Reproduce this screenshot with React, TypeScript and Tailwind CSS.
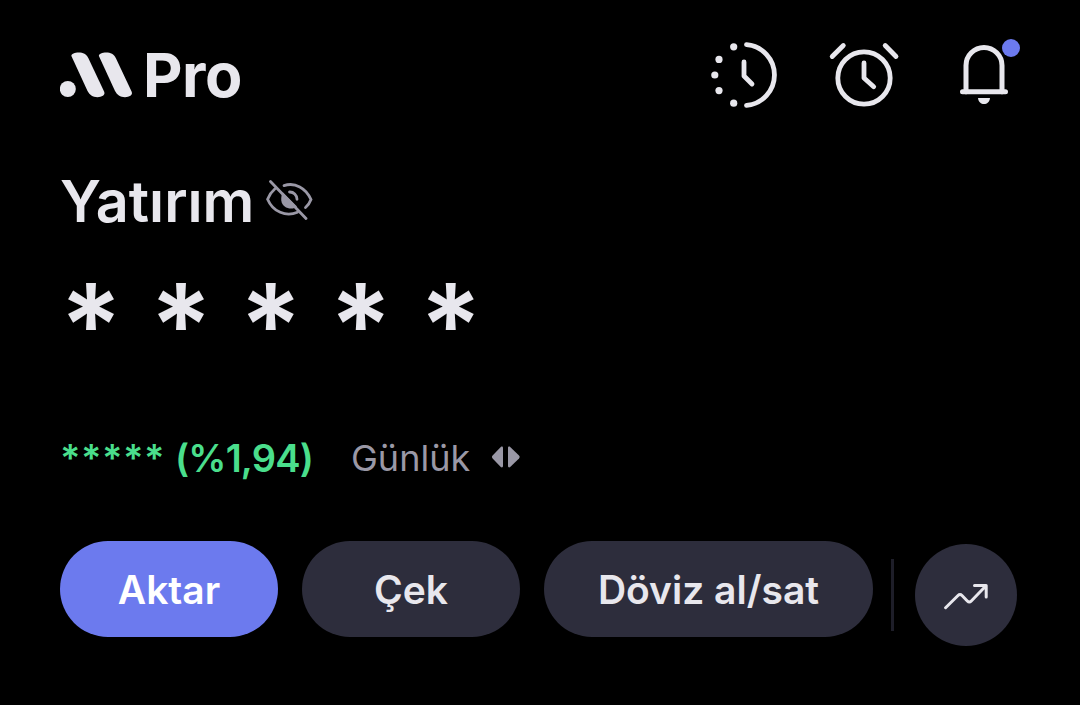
import type { ReactNode } from 'react';

const actions = [
  { label: 'Aktar', className: 'w-[218px] bg-[#6c7aee] text-white' },
  { label: 'Çek', className: 'w-[218px] bg-[#2d2d3c] text-[#e8e7ed]' },
  { label: 'Döviz al/sat', className: 'w-[329px] bg-[#2d2d3c] text-[#e8e7ed]' },
];

export default function App() {
  return (
    <main className="h-[705px] w-[1080px] overflow-hidden bg-black px-[60px] pt-[35px] font-['Inter',sans-serif] text-[#e8e7ed]">
      <Header />

      <section className="mt-[48px]">
        <div className="flex h-[76px] items-center">
          <h1 className="w-[206px] text-[57.5px] leading-[76px] font-semibold whitespace-nowrap">
            Yatırım
          </h1>
          <HiddenIcon />
        </div>
        <p className="mt-[35px] h-[103px] text-[115px] leading-[104px] font-semibold tracking-[-0.55px] whitespace-nowrap">
          * * * * *
        </p>
        <div className="mt-[51px] flex h-[60px] items-center">
          <p className="flex w-[291px] text-[38px] font-semibold whitespace-nowrap text-[#4ade8c]">
            <span className="w-[115px] tracking-[0.5px]">*****</span>
            <span className="tracking-[-0.85px]">(%1,94)</span>
          </p>
          <button className="flex items-center text-[#9a98a6]">
            <span className="w-[140px] text-left text-[36px] whitespace-nowrap">Günlük</span>
            <SwitchIcon />
          </button>
        </div>
      </section>

      <Actions />
    </main>
  );
}

function Header() {
  return (
    <header className="flex h-20 items-center justify-between">
      <div className="flex items-center">
        <LogoMark />
        <span className="ml-[9px] text-[61px] leading-[80px] font-[650] tracking-[-0.5px]">Pro</span>
      </div>
      <div className="flex items-center">
        <IconButton>
          <HistoryIcon />
        </IconButton>
        <IconButton>
          <AlarmIcon />
        </IconButton>
        <IconButton>
          <BellIcon />
        </IconButton>
      </div>
    </header>
  );
}

function IconButton({ children }: { children: ReactNode }) {
  return <button className="ml-12 h-[72px] w-[72px] first:ml-0">{children}</button>;
}

function Actions() {
  return (
    <nav className="mt-[53px] flex items-start">
      <div className="flex gap-6">
        {actions.map((action) => (
          <button
            key={action.label}
            className={`h-24 rounded-full pt-[3px] text-[39px] font-semibold whitespace-nowrap ${action.className}`}
          >
            {action.label}
          </button>
        ))}
      </div>
      <span className="mt-[18px] ml-[18px] h-[72px] w-[3px] bg-[#1e1e29]" />
      <button className="mt-[3px] ml-[21px] flex h-[102px] w-[102px] items-center justify-center rounded-full bg-[#2d2d3c] pt-1">
        <TrendIcon />
      </button>
    </nav>
  );
}

function LogoMark() {
  return (
    <svg width="74" height="48" viewBox="0 0 74 48" fill="currentColor">
      <circle cx="7.8" cy="38" r="8" />
      <path d="M11.4 5C11 2.8 15 1.4 18.5 1.4C23.3 1.4 26.2 3 28.4 7.2L44.2 40.8C45.6 44.2 41.5 46.2 37.5 46.2C32.6 46.2 29.5 44 27.3 39.6Z" />
      <path d="M38.9 5C38.5 2.8 42.5 1.4 46 1.4C50.8 1.4 53.7 3 55.9 7.2L71.7 40.8C73.1 44.2 69 46.2 65 46.2C60.1 46.2 57 44 54.8 39.6Z" />
    </svg>
  );
}

function HistoryIcon() {
  return (
    <svg
      width="72"
      height="72"
      viewBox="0 0 72 72"
      fill="none"
      stroke="currentColor"
      strokeWidth="4.8"
      strokeLinecap="round"
    >
      <path d="M38.5 5.7A30.4 30.4 0 0 1 38.5 66.3" />
      <path d="M36 23V37L44 45" strokeLinejoin="round" />
      <g fill="currentColor" stroke="none">
        <circle cx="25.7" cy="7.8" r="3.6" />
        <circle cx="11" cy="20.4" r="3.6" />
        <circle cx="6.8" cy="36" r="3.6" />
        <circle cx="11" cy="51.6" r="3.6" />
        <circle cx="25.7" cy="64.2" r="3.6" />
      </g>
    </svg>
  );
}

function AlarmIcon() {
  return (
    <svg
      width="72"
      height="72"
      viewBox="0 0 72 72"
      fill="none"
      stroke="currentColor"
      strokeWidth="4.8"
      strokeLinecap="round"
      strokeLinejoin="round"
    >
      <circle cx="36" cy="39" r="26.2" />
      <path d="M36 24V39L45.7 47.7M4.2 17.5L15.3 6.5M57.2 6.5L68 17.5" />
    </svg>
  );
}

function BellIcon() {
  return (
    <svg width="72" height="72" viewBox="0 0 72 72">
      <path
        d="M18 53V26.5A18 18 0 0 1 54 26.5V53M14.5 52.7H57.5"
        fill="none"
        stroke="currentColor"
        strokeWidth="5"
        strokeLinecap="round"
      />
      <path d="M30 59H42C41.5 63 39 65.1 36 65.1C33 65.1 30.5 63 30 59Z" fill="currentColor" />
      <circle cx="63" cy="9" r="9" fill="#6c7aee" />
    </svg>
  );
}

function HiddenIcon() {
  return (
    <svg
      width="48"
      height="42"
      viewBox="0 0 48 42"
      fill="none"
      stroke="#9a98a6"
      strokeWidth="2.8"
      strokeLinecap="round"
    >
      <path d="M18 5.6C29 2 40 8 45 19.5C43.8 22.8 42 25.3 39.5 27.5" />
      <path d="M9 8.8C5.8 11.5 3.3 15 1.6 19.2C7 32 20 37 31.5 32.3" />
      <path d="M23.5 12C27.5 11.8 31 15 31 19.3" />
      <path d="M17 12.5L31 26.5C26 31 16 28 15.3 20.5C15 17 15.5 14.5 17 12.5Z" fill="#9a98a6" stroke="none" />
      <path d="M4.5 1.5L40 38.5" />
    </svg>
  );
}

function SwitchIcon() {
  return (
    <svg width="30" height="26" viewBox="0 0 30 26" fill="currentColor">
      <path d="M1.6 10.6L9.8 2C10.8 1.2 12 1.6 12 3V21C12 22.4 10.8 22.8 9.8 22L1.6 13.4C.7 12.5 .7 11.5 1.6 10.6Z" />
      <path d="M28 10.6L19.2 2C18.2 1.2 17 1.6 17 3V21C17 22.4 18.2 22.8 19.2 22L28 13.4C28.9 12.5 28.9 11.5 28 10.6Z" />
    </svg>
  );
}

function TrendIcon() {
  return (
    <svg
      width="44"
      height="28"
      viewBox="0 0 44 28"
      fill="none"
      stroke="currentColor"
      strokeWidth="3"
      strokeLinecap="round"
      strokeLinejoin="round"
    >
      <path d="M1.6 24.7L14 12.5Q16 10.5 18 12.5L23.3 18Q25.3 20 27.3 18L42 2.8M30.5 2.5H42.2V14" />
    </svg>
  );
}
